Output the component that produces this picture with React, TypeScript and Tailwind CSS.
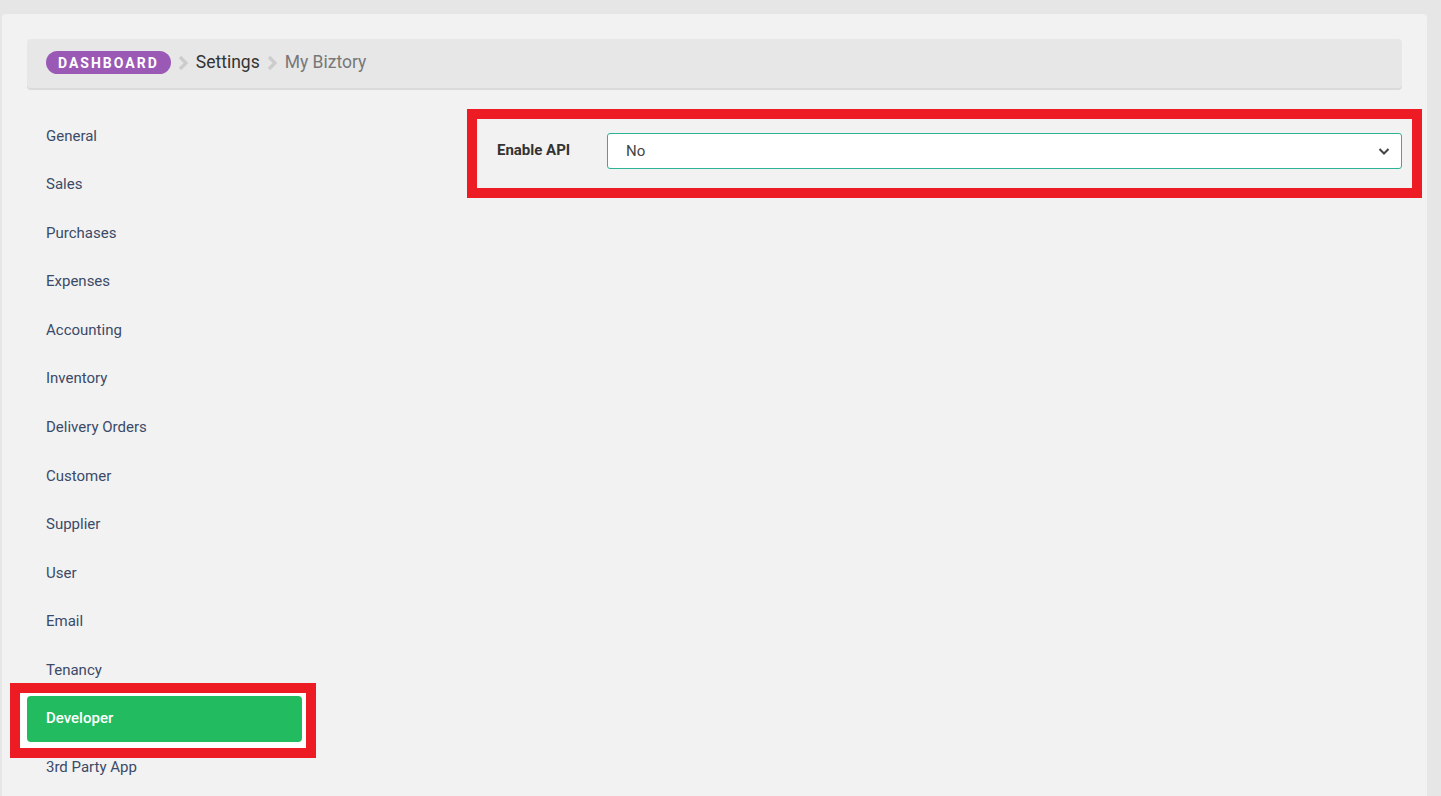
import React from "react";

const items = [
  "General",
  "Sales",
  "Purchases",
  "Expenses",
  "Accounting",
  "Inventory",
  "Delivery Orders",
  "Customer",
  "Supplier",
  "User",
  "Email",
  "Tenancy",
  "Developer",
  "3rd Party App",
];

function Chevron() {
  return (
    <svg width="10" height="16" viewBox="0 0 10 16" className="ml-[7px] mr-[8px]">
      <path d="M2 2 L8 8 L2 14" fill="none" stroke="#cccccc" strokeWidth="3.2" strokeLinecap="butt" strokeLinejoin="miter" />
    </svg>
  );
}

export default function App() {
  return (
    <div
      className="min-h-[796px] w-full bg-[#e6e6e6] pt-[14px] pl-[2px] pr-[14px] overflow-hidden"
      style={{ fontFamily: "Roboto, 'Liberation Sans', sans-serif" }}
    >
      <div className="bg-[#f2f2f2] rounded-t-[4px] min-h-[782px] px-[25px] pt-[25px]">
        <div className="h-[49px] bg-[#e7e7e7] rounded-[4px] shadow-[0_2px_0_#dadada] flex items-center pl-[19px] pb-[2px]">
          <span className="h-[23px] pl-[12px] pr-[12px] rounded-full bg-[#9b59b6] text-white text-[14px] font-bold tracking-[2px] flex items-center leading-none">
            DASHBOARD
          </span>
          <Chevron />
          <span className="text-[17.5px] text-[#333333]">Settings</span>
          <Chevron />
          <span className="text-[17.5px] text-[#777777]">My Biztory</span>
        </div>

        <div className="flex mt-[21px]">
          <div className="w-[440px] shrink-0 flex flex-col gap-[2.55px] pt-[4px]">
            {items.map((it) =>
              it === "Developer" ? (
                <div
                  key={it}
                  className="-ml-[17px] w-[306px] border-[10px] border-[#ed1c24] bg-white pt-[3px] pb-[6px] pl-[7px] pr-[4px] -mt-[13px] -mb-[16px] relative"
                >
                  <div className="h-[46px] rounded-[4px] bg-[#22bb5f] text-white text-[15px] font-medium flex items-center pl-[19px]">
                    {it}
                  </div>
                </div>
              ) : (
                <div key={it} className="h-[46px] flex items-center pl-[19px] text-[15px] text-[#3b4a68]">
                  {it}
                </div>
              )
            )}
          </div>

          <div className="flex-1 -mr-[20px]">
            <div className="border-[10px] border-[#ed1c24] h-[89px] flex items-start pt-[14px] pl-[20px] pr-[10px]">
              <div className="w-[110px] text-[15px] font-bold text-[#333333] pt-[6px]">Enable API</div>
              <div className="flex-1 h-[36px] bg-white border border-[#2bb394] rounded-[3px] flex items-center justify-between pl-[18px] pr-[10px]">
                <span className="text-[15px] text-[#444444]">No</span>
                <svg width="14" height="14" viewBox="0 0 14 14">
                  <path d="M2.5 5 L7 9.5 L11.5 5" fill="none" stroke="#444444" strokeWidth="2" />
                </svg>
              </div>
            </div>
          </div>
        </div>
      </div>
    </div>
  );
}
